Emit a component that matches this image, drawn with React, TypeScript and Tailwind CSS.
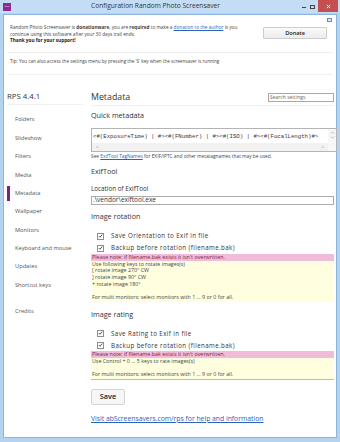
import React from 'react';

const navItems = [
  'Folders',
  'Slideshow',
  'Filters',
  'Media',
  'Metadata',
  'Wallpaper',
  'Monitors',
  'Keyboard and mouse',
  'Updates',
  'Shortcut keys',
];

function Check() {
  return (
    <span className="w-[7px] h-[7px] border border-[#8f8f8f] bg-white flex items-center justify-center shrink-0">
      <svg viewBox="0 0 8 8" className="w-[6px] h-[6px]">
        <path d="M1.3 4.1 L3.2 6 L6.7 1.7" fill="none" stroke="#2b2b2b" strokeWidth="1.3" />
      </svg>
    </span>
  );
}

function CheckRow({ label, className }: { label: string; className: string }) {
  return (
    <div className={`h-[10px] flex items-center gap-[7px] pl-[6px] ${className}`}>
      <Check />
      <span className="text-[6.2px] tracking-[0.4px] text-[#333] whitespace-nowrap">{label}</span>
    </div>
  );
}

function Note({ lines, className }: { lines: string[]; className?: string }) {
  return (
    <div className={className}>
      <div className="h-[6.5px] bg-[#f1bcd9] text-[#7a1f45] text-[5.4px] leading-[6.5px] pl-[1px] whitespace-nowrap">
        Please note: if filename.bak exists it isn't overwritten.
      </div>
      <div className="bg-[#ffffe0] text-[#444] text-[5.3px] leading-[6.8px] pl-[1px] pb-[1px] whitespace-nowrap">
        {lines.map((l, i) => (
          <div key={i} className="h-[6.8px]">{l}</div>
        ))}
      </div>
    </div>
  );
}

export default function App() {
  return (
    <div className="w-[340px] h-[442px] bg-[#b3d3f1] flex flex-col font-['Open_Sans',sans-serif] overflow-hidden">
      {/* title bar */}
      <div className="h-[13px] flex items-center relative bg-[#c5ddf4]">
        <div className="ml-[3px] w-[8px] h-[8px] bg-[#8e2a93] flex items-center justify-center">
          <span className="text-[2.5px] text-white leading-none">RPS</span>
        </div>
        <div className="flex-1 text-center text-[6.6px] text-[#333] leading-none">
          Configuration Random Photo Screensaver
        </div>
        <div className="flex items-center h-full">
          <div className="w-[8px] h-full flex items-center justify-center">
            <span className="w-[4px] h-[1.5px] bg-[#444] mt-[2px]" />
          </div>
          <div className="w-[8px] h-full flex items-center justify-center">
            <span className="w-[5px] h-[4px] border border-[#444] border-t-[1.5px]" />
          </div>
          <div className="w-[20px] h-[12px] self-start ml-[2px] mr-[2px] bg-[#c74e4e] flex items-center justify-center">
            <svg viewBox="0 0 6 6" className="w-[5px] h-[5px]">
              <path d="M1 1 L5 5 M5 1 L1 5" stroke="white" strokeWidth="1.2" />
            </svg>
          </div>
        </div>
      </div>

      {/* window body */}
      <div className="mx-[3px] mb-[4px] mt-[1px] flex-1 bg-white border border-[#8cb6e0] flex flex-col min-w-0">
        {/* donation header */}
        <div className="h-[38px] border-b border-[#efefef] mx-[3px] flex relative">
          <div className="pl-[3px] pt-[9px] w-[245px] shrink-0 text-[4.7px] leading-[6.6px] text-[#444]">
            <div className="whitespace-nowrap">
              Random Photo Screensaver is <b>donationware</b>, you are <b>required</b> to make a{' '}
              <span className="text-[#2a64c0] underline">donation to the author</span> is you
            </div>
            <div>continue using this software after your 30 days trail ends.</div>
            <div className="font-bold text-[#222]">Thank you for your support!</div>
          </div>
          <div className="ml-[11px] mt-[12px] w-[64px] h-[12px] border border-[#cdcdcd] rounded-[1px] bg-gradient-to-b from-[#fafafa] to-[#ececec] flex items-center justify-center text-[5.6px] text-[#222] font-semibold">
            Donate
          </div>
          <div className="absolute right-[1px] top-[3px] w-[5px] h-[4px] border border-[#5b8fd0] bg-[#dbe9f8]" />
        </div>

        {/* tip */}
        <div className="h-[22px] border-b border-[#f2f2f2] mx-[3px] pl-[3px] pt-[5px] text-[4.6px] leading-[7px] text-[#444] whitespace-nowrap">
          Tip: You can also access the settings menu by pressing the 'S' key when the screensaver is running
        </div>

        {/* settings body */}
        <div className="flex flex-1 min-w-0">
          {/* sidebar */}
          <div className="w-[81px] shrink-0 pt-[15px] pl-[3px] pr-[2px]">
            <div className="h-[15px] border-b border-[#f0f0f0] flex items-center text-[7.8px] text-[#333] leading-none">
              RPS 4.4.1
            </div>
            <div className="mt-[6px]">
              {navItems.map((n) => (
                <div key={n} className="h-[18.4px] flex items-center relative">
                  {n === 'Metadata' && <span className="absolute left-0 w-[2.5px] h-[15px] bg-[#7b217f]" />}
                  <span className="pl-[8px] text-[5.7px] text-[#555] leading-none whitespace-nowrap">{n}</span>
                </div>
              ))}
            </div>
            <div className="mt-[8px] h-[18.4px] flex items-center pl-[8px] text-[5.7px] text-[#555] leading-none">
              Credits
            </div>
          </div>

          {/* main */}
          <div className="flex-1 min-w-0 ml-[6px] mr-[2px] pt-[15px]">
            <div className="h-[16px] border-b border-[#f0f0f0] flex items-center justify-between">
              <span className="text-[8.8px] text-[#333] leading-none">Metadata</span>
              <div className="w-[66px] h-[9px] border border-[#a9a9a9] flex items-center pl-[1px] text-[5px] text-[#666] leading-none">
                Search settings
              </div>
            </div>

            <div className="mt-[3px] h-[14px] flex items-center text-[7.2px] text-[#333] leading-none">Quick metadata</div>

            <div className="mt-[5px] -mr-[3px] h-[24px] border border-[#b4b4b4] flex">
              <div className="flex-1 flex flex-col min-w-0">
                <div className="flex-1 pl-[1px] pt-[5px] font-['Liberation_Mono',monospace] text-[5.7px] text-[#333] leading-none whitespace-nowrap overflow-hidden">
                  {'<#(ExposureTime) | #><#(FNumber) | #><#(ISO) | #><#(FocalLength)#>'}
                </div>
                <div className="h-[8px] bg-[#f2f2f2] flex items-center justify-between px-[4px] text-[5px] text-[#999] leading-none">
                  <span>&lt;</span>
                  <span>&gt;</span>
                </div>
              </div>
              <div className="w-[8px] shrink-0 bg-[#f7f7f7] flex flex-col items-center pt-[2px] gap-[2px] text-[#999]">
                <svg viewBox="0 0 6 4" className="w-[5px] h-[3px]">
                  <path d="M0.5 3.5 L3 1 L5.5 3.5" fill="none" stroke="#999" strokeWidth="0.8" />
                </svg>
                <svg viewBox="0 0 6 4" className="w-[5px] h-[3px]">
                  <path d="M0.5 0.5 L3 3 L5.5 0.5" fill="none" stroke="#999" strokeWidth="0.8" />
                </svg>
              </div>
            </div>

            <div className="mt-[1px] h-[7px] flex items-center text-[4.8px] text-[#444] leading-none whitespace-nowrap">
              See&nbsp;<span className="text-[#2a64c0] underline">ExifTool TagNames</span>&nbsp;for EXIF/IPTC and other metatagnames that may be used.
            </div>

            <div className="mt-[5px] h-[14px] flex items-center text-[7.2px] text-[#333] leading-none">ExifTool</div>

            <div className="mt-[6px] h-[8px] flex items-center text-[6.3px] text-[#333] leading-none">Location of ExifTool</div>
            <div className="mt-[3px] h-[9px] border border-[#ababab] flex items-center pl-[1px] text-[6.5px] text-[#333] leading-none">
              .\vendor\exiftool.exe
            </div>

            <div className="mt-[5px] h-[14px] flex items-center text-[7.2px] text-[#333] leading-none">Image rotation</div>

            <CheckRow className="mt-[7px]" label="Save Orientation to Exif in file" />
            <CheckRow className="mt-[2px]" label="Backup before rotation (filename.bak)" />

            <Note
              className="mt-[1px]"
              lines={[
                'Use following keys to rotate images(s)',
                '[ rotate image 270° CW',
                '] rotate image 90° CW',
                '+ rotate image 180°',
                '',
                'For multi monitors: select monitors with 1 ... 9 or 0 for all.',
              ]}
            />

            <div className="mt-[5px] h-[14px] flex items-center text-[7.2px] text-[#333] leading-none">Image rating</div>

            <CheckRow className="mt-[7px]" label="Save Rating to Exif in file" />
            <CheckRow className="mt-[2px]" label="Backup before rotation (filename.bak)" />

            <Note
              className="mt-[1px] border-b border-[#bdbdbd]"
              lines={['Use Control + 0 ... 5 keys to rate images(s)', '', 'For multi monitors: select monitors with 1 ... 9 or 0 for all.']}
            />

            <div className="mt-[9px] w-[34px] h-[16px] border border-[#d4d4d4] rounded-[2px] bg-[#f6f6f6] flex items-center justify-center text-[7.4px] font-semibold text-[#222] leading-none">
              Save
            </div>

            <div className="mt-[9px] h-[10px] flex items-center text-[6.8px] text-[#2a64c0] underline leading-none whitespace-nowrap">
              Visit abScreensavers.com/rps for help and information
            </div>
          </div>
        </div>
      </div>
    </div>
  );
}
